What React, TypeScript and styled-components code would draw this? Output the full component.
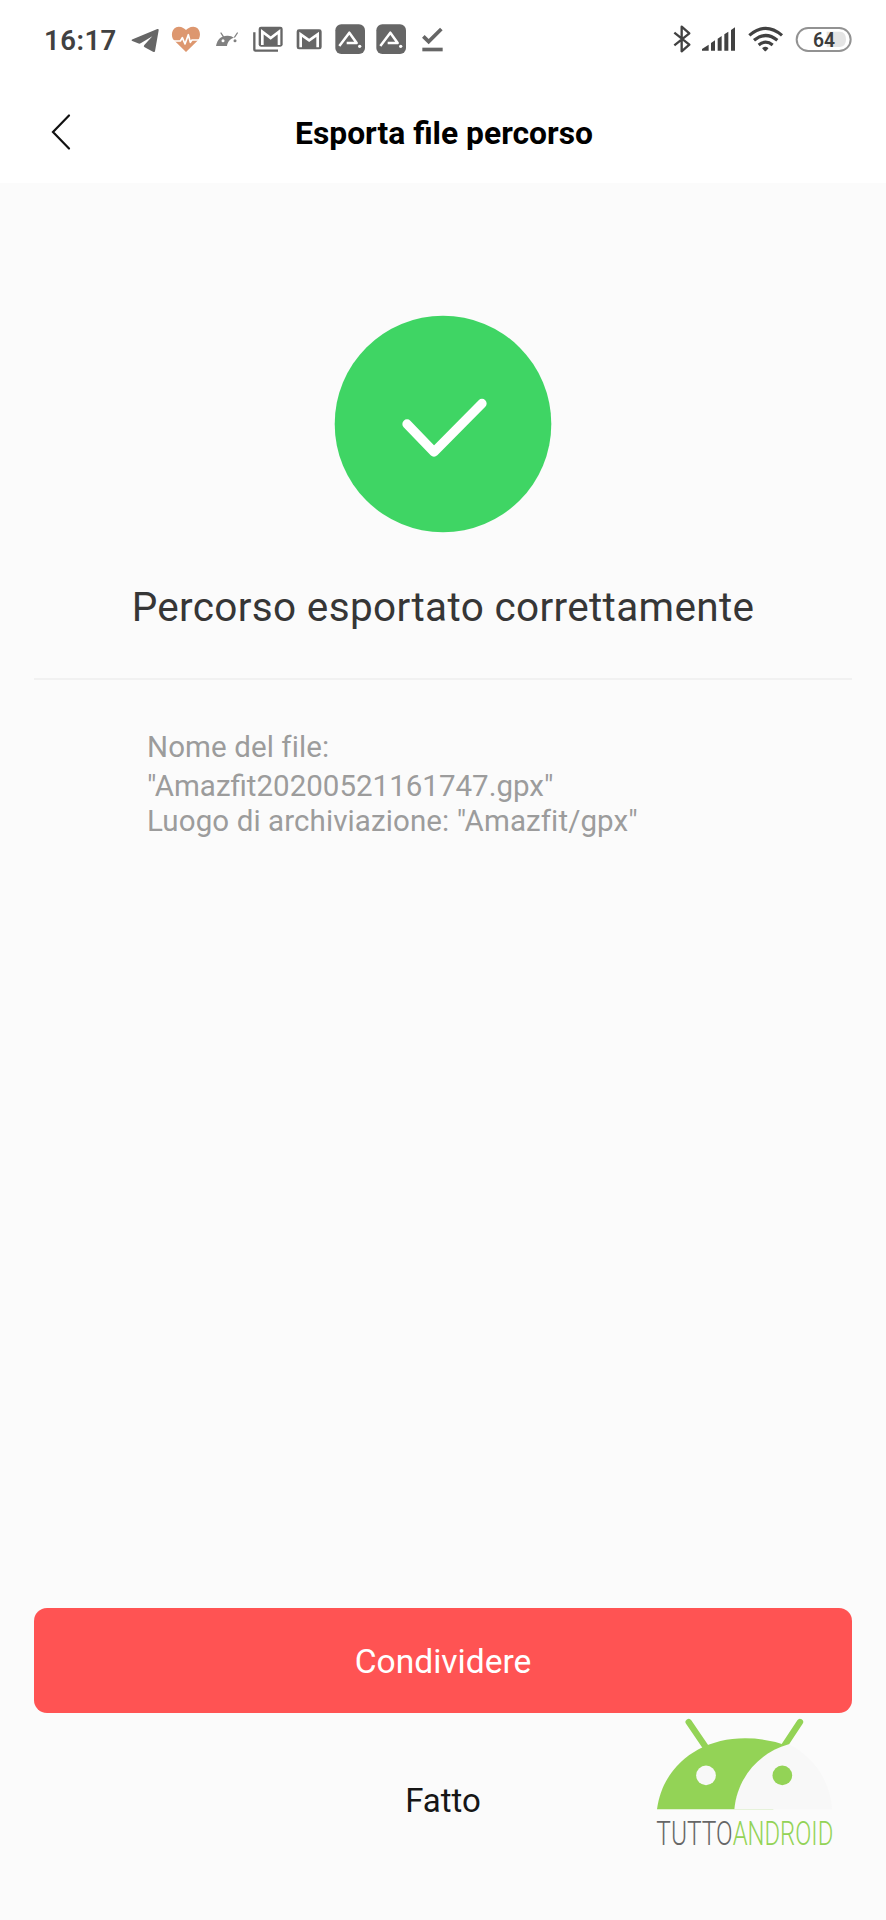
import React from 'react';
import styled, { createGlobalStyle } from 'styled-components';

const GlobalStyle = createGlobalStyle`
  * { box-sizing: border-box; }
  html, body { margin: 0; padding: 0; background: #fbfbfb; }
  body { font-family: Roboto, "Liberation Sans", sans-serif; }
  button { font-family: inherit; border: 0; padding: 0; background: none; }
`;

const Screen = styled.div`
  position: relative;
  display: flex;
  flex-direction: column;
  width: 886px;
  height: 1920px;
  overflow: hidden;
  background: #fbfbfb;
`;

const Header = styled.header`
  height: 183px;
  background: #fff;
`;

const StatusBar = styled.div`
  display: flex;
  align-items: center;
  height: 80px;
  padding: 0 34px 0 44px;
`;

const Clock = styled.div`
  width: 80.6px;
  padding-top: 1px;
  font-size: 27.5px;
  line-height: 40px;
  font-weight: 600;
  letter-spacing: 0.5px;
  color: #414141;
  white-space: nowrap;
`;

const IconGroup = styled.div<{ $end?: boolean }>`
  display: flex;
  height: 40px;
  margin-left: ${(p) => (p.$end ? 'auto' : '0')};
`;

const StatusIcon = styled.svg<{ $w?: number }>`
  display: block;
  flex: none;
  width: ${(p) => p.$w ?? 41}px;
  height: 40px;
`;

const TitleBar = styled.div`
  display: grid;
  grid-template-columns: 80px 1fr 80px;
  align-items: center;
  height: 103px;
`;

const BackButton = styled.button`
  display: flex;
  padding-left: 50px;
`;

const Title = styled.h1`
  margin: 0;
  padding: 2px 0 0 2px;
  text-align: center;
  font-size: 31.8px;
  line-height: 40px;
  font-weight: 700;
  color: #000;
`;

const Result = styled.main`
  display: flex;
  flex-direction: column;
  align-items: center;
  flex: 1;
  padding: 132px 34px 0;
`;

const Heading = styled.h2`
  margin: 49px 0 0;
  font-size: 40.5px;
  line-height: 50px;
  font-weight: 400;
  letter-spacing: 0.34px;
  color: #363636;
  white-space: nowrap;
`;

const Divider = styled.hr`
  align-self: stretch;
  height: 2px;
  margin: 46px 0 0;
  border: 0;
  background: #f1f1f1;
`;

const Details = styled.div`
  align-self: stretch;
  padding: 49px 0 0 113px;
  font-size: 29.5px;
  color: #9c9c9c;
  white-space: nowrap;
`;

const DetailLine = styled.div<{ $h?: number; $spacing?: number }>`
  line-height: 36px;
  height: ${(p) => p.$h ?? 36}px;
  letter-spacing: ${(p) => p.$spacing ?? 0.1}px;
  font-variant-ligatures: common-ligatures;
`;

const Actions = styled.footer`
  display: flex;
  flex-direction: column;
  height: 312px;
  padding: 0 34px;
`;

const ActionButton = styled.button<{ $primary?: boolean }>`
  height: ${(p) => (p.$primary ? 105 : 80)}px;
  margin-top: ${(p) => (p.$primary ? 0 : 48)}px;
  padding-top: ${(p) => (p.$primary ? 3 : 0)}px;
  border-radius: 13px;
  font-size: ${(p) => (p.$primary ? 33.6 : 33)}px;
  line-height: 40px;
  color: ${(p) => (p.$primary ? '#fff' : '#161616')};
  background: ${(p) => (p.$primary ? '#ff5353' : 'transparent')};
`;

const Watermark = styled.svg`
  position: absolute;
  right: 26px;
  bottom: 60px;
  width: 220px;
  height: 160px;
  overflow: visible;
`;

const GREY = '#666';
const DARK = '#414141';

const AppBadge = () => (
  <StatusIcon viewBox="0 0 123 120">
    <rect x="16" y="13" width="89" height="89" rx="18" fill={GREY} />
    <path d="M28 78 L58 38 L80 69 H50" fill="none" stroke="#fff" strokeWidth="7.500" strokeLinejoin="round" />
    <circle cx="89" cy="79" r="5" fill="#fff" />
  </StatusIcon>
);

export default function App() {
  return (
    <Screen>
      <GlobalStyle />
      <Header>
        <StatusBar>
          <Clock>16:17</Clock>
          <IconGroup>
            <StatusIcon viewBox="0 0 123 120">
              <path d="M20 62 Q19 59 23 58 L97 27 Q102 26 101 31 L90 94 Q89 98 84 95 L59 82 Q54 79 58 75 L82 49 L47 70 Q43 72 39 70 Z" fill={GREY} />
            </StatusIcon>
            <StatusIcon viewBox="0 0 123 120">
              <path d="M60 96 L24 61 C13 49 16 21 38 20 C49 20 56 26 60 30 C64 26 71 20 82 20 C103 21 107 47 96 61 Z" fill="#dd976f" />
              <path d="M15 63 H43 L49 53 L57 72 L67 44 L73 67 L78 60 H104" fill="none" stroke="#fff" strokeWidth="5" strokeLinejoin="round" />
            </StatusIcon>
            <StatusIcon viewBox="0 0 123 120">
              <path d="M27 78 C31 57 43 47 60 47 Q72 46 81 53 C68 57 61 67 60 78 Z" fill="#808080" />
              <path d="M42 39 L49 50 M91 39 L83 51" stroke="#808080" strokeWidth="4" strokeLinecap="round" />
              <circle cx="48" cy="62" r="4.5" fill="#fff" />
              <circle cx="84" cy="62" r="4.5" fill="#808080" />
            </StatusIcon>
            <StatusIcon viewBox="0 0 123 120">
              <path d="M19 37 V88 Q19 92 23 92 H90" fill="none" stroke={GREY} strokeWidth="7" />
              <rect x="32" y="20" width="72" height="60" rx="7" fill={GREY} />
              <path d="M43 75 V35 L68 54 L93 35 V75" fill="none" stroke="#fff" strokeWidth="8" />
            </StatusIcon>
            <StatusIcon viewBox="0 0 123 120">
              <rect x="23" y="28" width="75" height="60" rx="7" fill={GREY} />
              <path d="M35 82 V43 L60.500 61 L86 43 V82" fill="none" stroke="#fff" strokeWidth="8" />
            </StatusIcon>
            <AppBadge />
            <AppBadge />
            <StatusIcon viewBox="0 0 123 120">
              <path d="M34 49 L50 65 L88 27" fill="none" stroke={GREY} strokeWidth="11" />
              <rect x="31" y="83" width="61" height="11" fill={GREY} />
            </StatusIcon>
          </IconGroup>
          <IconGroup $end>
            <StatusIcon $w={26} viewBox="30 30 78 120">
              <path d="M43 68 L88 104 L65 124 V50 L88 70 L43 106" fill="none" stroke={DARK} strokeWidth="7" strokeLinejoin="round" />
            </StatusIcon>
            <StatusIcon $w={46} viewBox="108 30 138 120">
              <path d="M126 122 V117 L146 104 V122 Z M153 122 V99 L165 91 V122 Z M173 122 V86 L185 78 V122 Z M193 122 V73 L205 65 V122 Z M213 122 V60 L225 52 V122 Z" fill={DARK} />
            </StatusIcon>
            <StatusIcon $w={48} viewBox="246 30 144 120">
              <path d="M268 76 Q317 34 366 76 M282 91 Q317 62 352 91 M296 105 Q317 88 338 105" fill="none" stroke={DARK} strokeWidth="9.500" />
              <path d="M309 115 Q316 110 323 115 L316 122 Z" fill={DARK} stroke={DARK} strokeWidth="4" strokeLinejoin="round" />
            </StatusIcon>
            <StatusIcon $w={62} viewBox="390 30 186 120">
              <rect x="410" y="54" width="162" height="69" rx="34.500" fill="#fff" stroke="#929292" strokeWidth="6" />
              <path d="M500 65 H540 Q558 66 558 88 Q558 110 540 111 H500 Z" fill="#e4e4e4" />
              <text x="459" y="110" fontSize="58" fontWeight="600" fill="#3c3c3c" textLength="66" lengthAdjust="spacingAndGlyphs">64</text>
            </StatusIcon>
          </IconGroup>
        </StatusBar>
        <TitleBar>
          <BackButton aria-label="Indietro">
            <svg width="22" height="38" viewBox="0 0 22 38">
              <path d="M19 2.500 L3 19 L19 35.500" fill="none" stroke="#111" strokeWidth="2.200" strokeLinecap="round" />
            </svg>
          </BackButton>
          <Title>Esporta file percorso</Title>
        </TitleBar>
      </Header>
      <Result>
        <svg width="218" height="218" viewBox="0 0 218 218">
          <circle cx="109" cy="109" r="108.300" fill="#3fd564" />
          <path d="M73 109 L100 137 L148 88.500" fill="none" stroke="#fff" strokeWidth="9.300" strokeLinecap="round" strokeLinejoin="round" />
        </svg>
        <Heading>Percorso esportato correttamente</Heading>
        <Divider />
        <Details>
          <DetailLine $h={39}>Nome del file:</DetailLine>
          <DetailLine $h={35} $spacing={0}>"Amazfit20200521161747.gpx"</DetailLine>
          <DetailLine>Luogo di archiviazione: "Amazfit/gpx"</DetailLine>
        </Details>
      </Result>
      <Actions>
        <ActionButton $primary>Condividere</ActionButton>
        <ActionButton>Fatto</ActionButton>
      </Actions>
      <Watermark viewBox="0 0 660 480">
        <path d="M146 66 L199 144 M480 66 L430 142" stroke="#93d356" strokeWidth="19" strokeLinecap="round" />
        <path d="M51 328 C68 198 178 115 315 115 Q385 115 442 137 L400 328 Z" fill="#93d356" />
        <path d="M283 328 C291 240 350 160 446 133 C520 168 572 245 576 328 Z" fill="#f8f8f8" />
        <circle cx="198" cy="226" r="29.500" fill="#f8f8f8" />
        <circle cx="427" cy="226" r="29.500" fill="#93d356" />
        <text x="49" y="435" fontSize="99" fontWeight="300" fill="#666" textLength="229" lengthAdjust="spacingAndGlyphs">TUTTO</text>
        <text x="278" y="435" fontSize="99" fontWeight="300" fill="#93d356" textLength="302" lengthAdjust="spacingAndGlyphs">ANDROID</text>
      </Watermark>
    </Screen>
  );
}
